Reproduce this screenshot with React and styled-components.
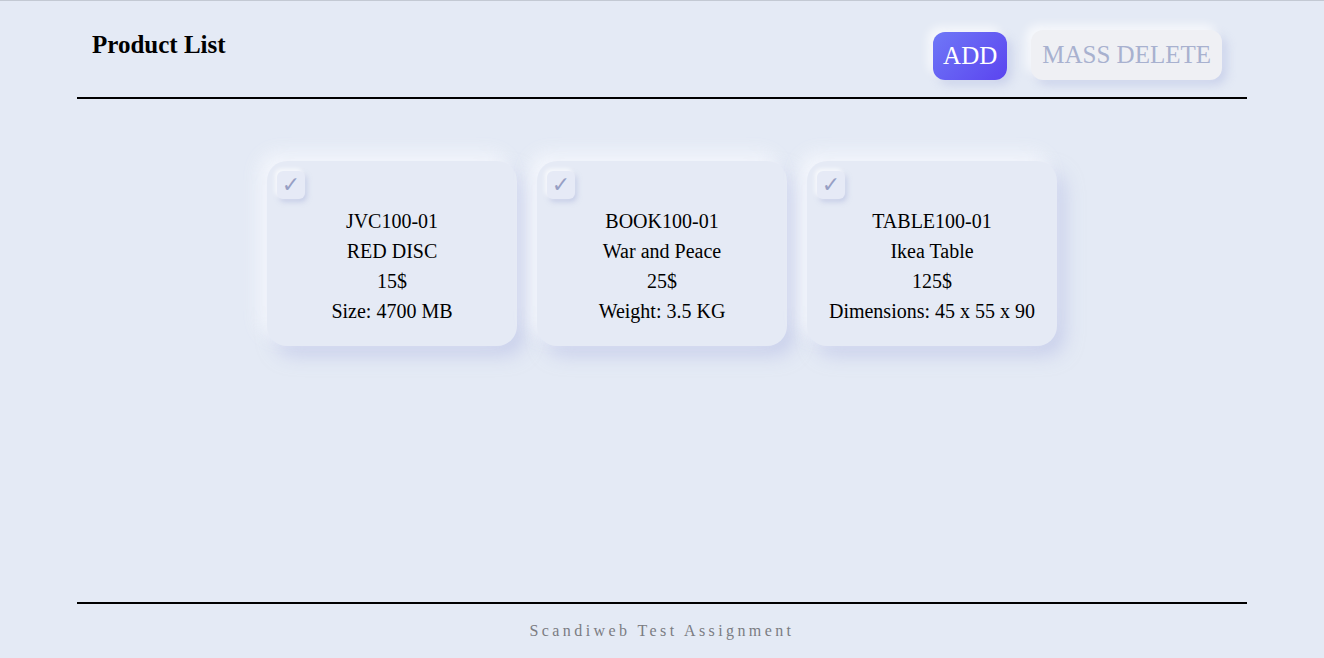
import React from 'react';
import styled, { createGlobalStyle } from 'styled-components';

const GlobalStyle = createGlobalStyle`
  html, body {
    margin: 0;
    padding: 0;
    background: #e4eaf5;
    font-family: "Liberation Serif", "Times New Roman", serif;
  }
  * { box-sizing: border-box; }
`;

const Page = styled.div`
  min-height: 100vh;
  border-top: 1px solid #c3c9d3;
  display: flex;
  flex-direction: column;
`;

const Container = styled.div`
  width: 1170px;
  margin: 0 auto;
  flex: 1;
  display: flex;
  flex-direction: column;
`;

const Header = styled.header`
  height: 98px;
  padding: 30px 25px 0 15px;
  display: flex;
  justify-content: space-between;
  align-items: flex-start;
  border-bottom: 2px solid #000;
`;

const Title = styled.h2`
  margin: 0;
  font-size: 25px;
  font-weight: 700;
  color: #000;
`;

const Actions = styled.div`
  display: flex;
  gap: 24px;
  margin-top: -1px;
`;

const Button = styled.button`
  padding: 0 ${p => (p.primary ? '10px' : '11px')};
  border: none;
  border-radius: 12px;
  font-family: inherit;
  font-size: 25px;
  cursor: pointer;
  color: ${p => (p.primary ? '#ffffff' : '#a8b1cf')};
  background: ${p =>
    p.primary
      ? 'linear-gradient(135deg, #6f78f7 0%, #5b44ef 100%)'
      : '#eff0f4'};
  box-shadow: -5px -5px 10px rgba(255, 255, 255, 0.7),
    5px 5px 10px rgba(175, 185, 225, 0.45);
  margin-top: ${p => (p.primary ? '2px' : '0')};
  height: ${p => (p.primary ? '48px' : '50px')};
`;

const Main = styled.main`
  flex: 1;
  padding-top: 62px;
  display: flex;
  justify-content: center;
  align-items: flex-start;
  gap: 20px;
`;

const Card = styled.div`
  width: 250px;
  padding: 10px 10px 20px;
  border-radius: 20px;
  background: #e5eaf5;
  box-shadow: -8px -8px 18px rgba(245, 247, 253, 0.9),
    8px 10px 18px rgba(180, 188, 228, 0.55);
  display: flex;
  flex-direction: column;
  align-items: center;
`;

const Check = styled.div`
  align-self: flex-start;
  width: 28px;
  height: 28px;
  border-radius: 6px;
  background: #e6eaf6;
  box-shadow: -2px -2px 4px rgba(255, 255, 255, 0.8),
    2px 3px 5px rgba(170, 180, 220, 0.5);
  display: flex;
  align-items: center;
  justify-content: center;
  color: #979fc4;
  font-family: "DejaVu Sans", sans-serif;
  font-size: 22px;
  font-weight: 700;
  line-height: 1;
  margin-bottom: 7px;
`;

const Line = styled.div`
  font-size: 20px;
  line-height: 30px;
  color: #000;
  white-space: nowrap;
`;

const Footer = styled.footer`
  height: 56px;
  border-top: 2px solid #000;
  display: flex;
  align-items: center;
  justify-content: center;
`;

const FooterText = styled.span`
  font-size: 16px;
  letter-spacing: 3.4px;
  color: #7b7c82;
`;

const products = [
  { sku: 'JVC100-01', name: 'RED DISC', price: '15$', attr: 'Size: 4700 MB' },
  { sku: 'BOOK100-01', name: 'War and Peace', price: '25$', attr: 'Weight: 3.5 KG' },
  { sku: 'TABLE100-01', name: 'Ikea Table', price: '125$', attr: 'Dimensions: 45 x 55 x 90' },
];

export default function App() {
  return (
    <Page>
      <GlobalStyle />
      <Container>
        <Header>
          <Title>Product List</Title>
          <Actions>
            <Button primary>ADD</Button>
            <Button>MASS DELETE</Button>
          </Actions>
        </Header>
        <Main>
          {products.map(p => (
            <Card key={p.sku}>
              <Check>✓</Check>
              <Line>{p.sku}</Line>
              <Line>{p.name}</Line>
              <Line>{p.price}</Line>
              <Line>{p.attr}</Line>
            </Card>
          ))}
        </Main>
        <Footer>
          <FooterText>Scandiweb Test Assignment</FooterText>
        </Footer>
      </Container>
    </Page>
  );
}
